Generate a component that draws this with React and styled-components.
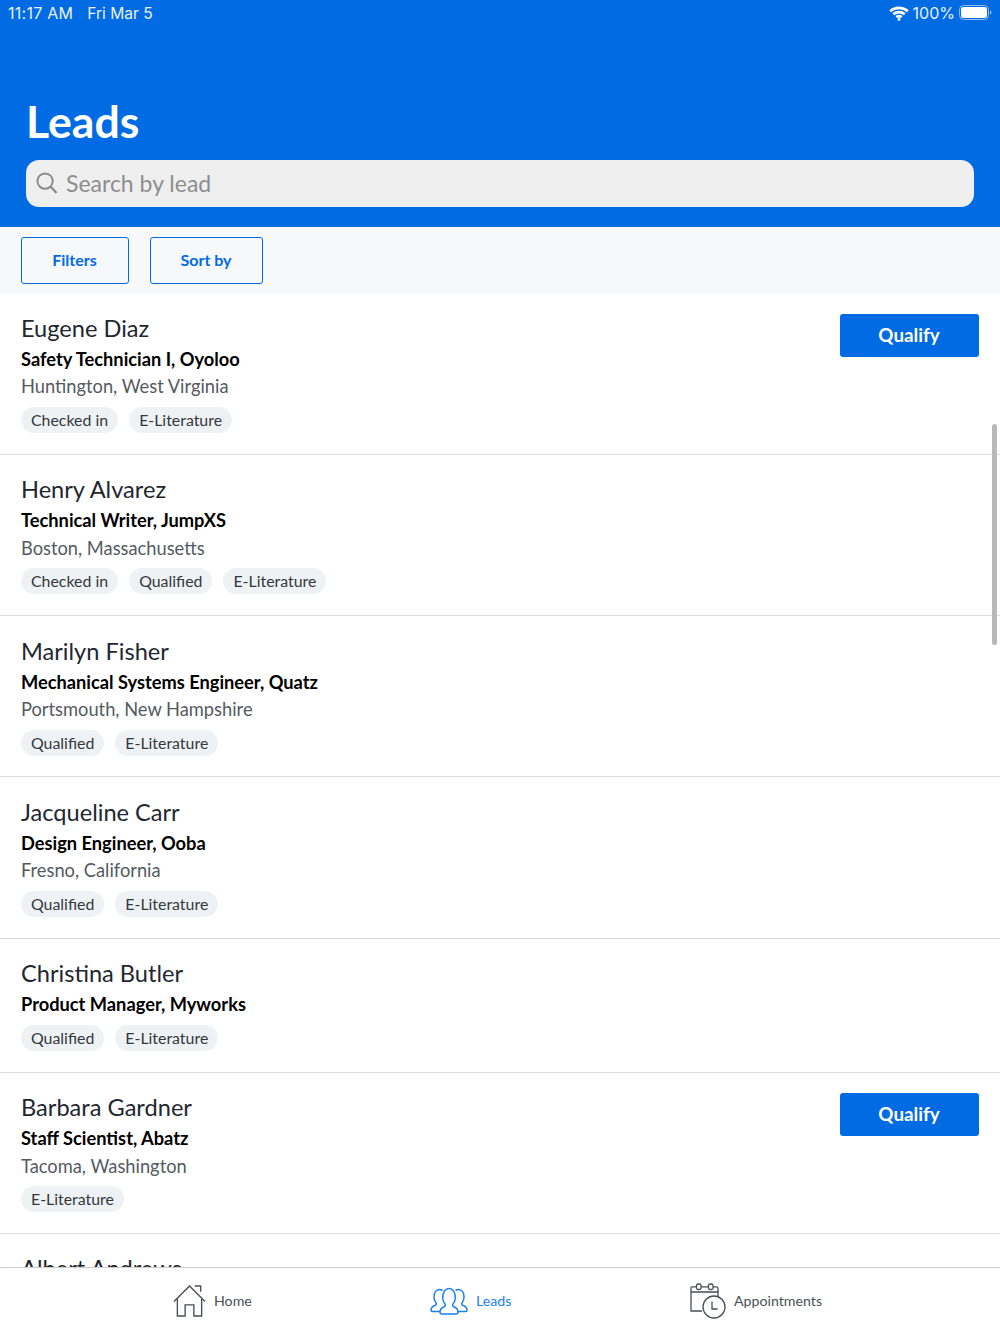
import React from "react";
import styled, { createGlobalStyle } from "styled-components";

const Global = createGlobalStyle`
  html, body { margin: 0; padding: 0; background: #fff; }
  body { font-family: Lato, "Liberation Sans", sans-serif; }
  * { box-sizing: border-box; }
`;
const Page = styled.div`
  position: relative;
  width: 1000px;
  height: 1333px;
  overflow: hidden;
  display: flex;
  flex-direction: column;
  background: #fff;
`;
const Header = styled.header`
  height: 227px;
  flex: none;
  background: #006be3;
  color: #fff;
  padding: 0 26px;
  display: flex;
  flex-direction: column;
`;
const StatusBar = styled.div`
  height: 26px;
  margin: 0 -18px;
  display: flex;
  align-items: center;
  justify-content: space-between;
  font-family: Inter, Roboto, sans-serif;
  font-size: 16px;
  color: #e8f1fd;
`;
const StatusGroup = styled.div`
  display: flex;
  align-items: center;
  gap: ${p => p.$gap}px;
`;
const Clock = styled.span`
  letter-spacing: 0.25px;
`;
const DateText = styled.span`
  font-size: 15.6px;
`;
const Title = styled.h1`
  margin: 68px 0 0;
  font-size: 44.6px;
  line-height: 53px;
  font-weight: 700;
`;
const SearchBox = styled.div`
  margin-top: 13px;
  height: 47px;
  border-radius: 13px;
  background: #efefef;
  display: flex;
  align-items: center;
  gap: 8px;
  padding: 0 0 2px 10px;
  color: #8e8e8e;
  font-size: 23px;
`;
const Toolbar = styled.div`
  height: 66.6px;
  flex: none;
  background: #f7f8fa;
  display: flex;
  align-items: center;
  gap: 21px;
  padding: 0 21px;
`;
const OutlineButton = styled.div`
  height: 47px;
  width: ${p => p.$w}px;
  border: 1.5px solid #006be3;
  border-radius: 3px;
  display: flex;
  align-items: center;
  justify-content: center;
  color: #006be3;
  font-size: 16px;
  font-weight: 700;
  padding: 0 1px 1px 0;
`;
const List = styled.div`
  flex: 1;
  overflow: hidden;
  min-height: 0;
`;
const Row = styled.div`
  position: relative;
  height: ${p => (p.$short ? 134 : 161.3)}px;
  border-bottom: 1.5px solid #dcdcdc;
  padding: 18.4px 21px 0;
`;
const Name = styled.div`
  font-size: 23.6px;
  line-height: 32px;
  color: #1f2730;
  font-weight: 400;
`;
const Role = styled.div`
  margin-top: 3px;
  font-size: 18.25px;
  line-height: 24px;
  color: #000;
  font-weight: 700;
`;
const Location = styled.div`
  margin-top: 3.4px;
  font-size: 18.3px;
  line-height: 24px;
  color: #555a60;
`;
const Tags = styled.div`
  margin-top: 8.6px;
  display: flex;
  gap: 11px;
`;
const Tag = styled.span`
  height: 26px;
  padding: 0 10px;
  border-radius: 13px;
  background: #eff2f5;
  color: #33383d;
  font-size: 15.9px;
  line-height: 26px;
`;
const Qualify = styled.div`
  position: absolute;
  top: 20px;
  right: 21px;
  width: 139px;
  height: 43px;
  border-radius: 3px;
  background: #006be3;
  color: #fff;
  font-size: 18.8px;
  font-weight: 700;
  padding: 0 1px 1px 0;
  display: flex;
  align-items: center;
  justify-content: center;
`;
const Scrollbar = styled.div`
  position: absolute;
  left: 992px;
  top: 424px;
  width: 5px;
  height: 221px;
  border-radius: 3px;
  background: #b9b9b9;
`;
const TabBar = styled.nav`
  position: absolute;
  left: 0;
  right: 0;
  bottom: 0;
  height: 66px;
  background: #fff;
  border-top: 1.5px solid #cfcfcf;
  display: flex;
  align-items: center;
  padding-left: 173px;
`;
const TabItem = styled.div`
  width: ${p => p.$w}px;
  flex: none;
  display: flex;
  align-items: center;
  gap: 8px;
  font-size: 14.2px;
  color: ${p => (p.$active ? "#1a7ff0" : "#4a4f55")};
`;
const TabLabel = styled.span`
  margin-top: -1px;
`;

const leads = [
  { n: "Eugene Diaz", r: "Safety Technician I, Oyoloo", l: "Huntington, West Virginia", t: ["Checked in", "E-Literature"], q: true },
  { n: "Henry Alvarez", r: "Technical Writer, JumpXS", l: "Boston, Massachusetts", t: ["Checked in", "Qualified", "E-Literature"] },
  { n: "Marilyn Fisher", r: "Mechanical Systems Engineer, Quatz", l: "Portsmouth, New Hampshire", t: ["Qualified", "E-Literature"] },
  { n: "Jacqueline Carr", r: "Design Engineer, Ooba", l: "Fresno, California", t: ["Qualified", "E-Literature"] },
  { n: "Christina Butler", r: "Product Manager, Myworks", t: ["Qualified", "E-Literature"] },
  { n: "Barbara Gardner", r: "Staff Scientist, Abatz", l: "Tacoma, Washington", t: ["E-Literature"], q: true },
  { n: "Albert Andrews", r: "", l: "", t: [] },
];

const Wifi = () => (
  <svg width="20" height="15" viewBox="0 0 20 15" fill="none" stroke="#fff" strokeWidth="2.7">
    <path d="M1.2 5.2C6 .8 14 .8 18.800 5.2" />
    <path d="M4.300 8.300c3.200-2.800 8.200-2.800 11.400 0" />
    <path d="M7.300 11.100c1.600-1.200 3.800-1.200 5.400 0" />
    <circle cx="10" cy="13.400" r="1.400" fill="#fff" stroke="none" />
  </svg>
);
const Battery = () => (
  <svg width="33" height="16" viewBox="0 0 33 16">
    <rect x=".5" y=".5" width="29" height="14" rx="4" fill="none" stroke="#8fbdf2" />
    <rect x="2" y="2" width="26" height="11" rx="2.5" fill="#fff" />
    <path d="M31 5.500c1 .4 1.500 1.100 1.500 2s-.5 1.600-1.500 2z" fill="#8fbdf2" />
  </svg>
);
const SearchIcon = () => (
  <svg width="22" height="24" viewBox="0 0 23 24" fill="none" stroke="#8a8a8a" strokeWidth="2">
    <circle cx="9.500" cy="10" r="8" />
    <path d="M15.500 16l6 6.500" strokeWidth="2.400" />
  </svg>
);
const HomeIcon = () => (
  <svg width="33" height="34" viewBox="0 0 34 34" fill="none" stroke="#4a4f55" strokeWidth="1.400">
    <path d="M1 17.500 17 1.500l16 16" />
    <path d="M4.500 15v17.500h8V21h9v11.500h8V15" />
    <path d="M22.500 1.500h6v6" />
  </svg>
);
const LeadsIcon = () => (
  <svg width="38" height="28" viewBox="0 0 38 28" fill="none" stroke="#1a7ff0" strokeWidth="1.500">
    <path d="M12 27c-1.500 0-2-.8-2-2 0-3 2-4.500 4.500-5.500 1-.5 1-2 .2-3-1.500-1.500-2-3.500-2-6 0-5 2.500-9 6.300-9s6.300 4 6.300 9c0 2.500-.5 4.500-2 6-.8 1-.8 2.500.2 3 2.500 1 4.500 2.500 4.500 5.500 0 1.200-.5 2-2 2z" />
    <path d="M12.500 3.600C11.700 2.900 10.700 2.500 9.500 2.500 6 2.500 4 6 4 10c0 2.500.5 4 1.800 5.500.8 1 .6 2.300-.5 2.800C2.800 19.300 1 20.700 1 23c0 1 .5 1.500 1.500 1.500H10" />
    <path d="M25.500 3.600c.8-.7 1.800-1.100 3-1.100C32 2.500 34 6 34 10c0 2.500-.5 4-1.800 5.500-.8 1-.6 2.300.5 2.800 2.500 1 4.300 2.400 4.300 4.700 0 1-.5 1.500-1.500 1.500H28" />
  </svg>
);
const CalendarIcon = () => (
  <svg width="36" height="36" viewBox="0 0 36 36" fill="none" stroke="#4a4f55" strokeWidth="1.300">
    <path d="M12 28H1V5c0-.8.4-1.200 1.200-1.200H6" />
    <path d="M1 9h27v5" />
    <path d="M11 3.800h7M23 3.800h3.500c1 0 1.500.5 1.500 1.500V9" />
    <rect x="6.500" y="1" width="4.500" height="5.500" rx="1.500" />
    <rect x="18.500" y="1" width="4.500" height="5.500" rx="1.500" />
    <circle cx="24" cy="24" r="11" />
    <path d="M22 18.500V26h5.500" />
  </svg>
);

export default function App() {
  return (
    <Page>
      <Global />
      <Header>
        <StatusBar>
          <StatusGroup $gap={14}><Clock>11:17 AM</Clock><DateText>Fri Mar 5</DateText></StatusGroup>
          <StatusGroup $gap={4}><Wifi /><span>100%</span><Battery /></StatusGroup>
        </StatusBar>
        <Title>Leads</Title>
        <SearchBox><SearchIcon /><span>Search by lead</span></SearchBox>
      </Header>
      <Toolbar>
        <OutlineButton $w={108}>Filters</OutlineButton>
        <OutlineButton $w={113}>Sort by</OutlineButton>
      </Toolbar>
      <List>
        {leads.map(x => (
          <Row key={x.n} $short={!x.l && x.r}>
            <Name>{x.n}</Name>
            <Role>{x.r}</Role>
            {x.l && <Location>{x.l}</Location>}
            <Tags>{x.t.map(t => <Tag key={t}>{t}</Tag>)}</Tags>
            {x.q && <Qualify>Qualify</Qualify>}
          </Row>
        ))}
      </List>
      <Scrollbar />
      <TabBar>
        <TabItem $w={257}><HomeIcon /><TabLabel>Home</TabLabel></TabItem>
        <TabItem $w={260} $active><LeadsIcon /><TabLabel>Leads</TabLabel></TabItem>
        <TabItem $w={200}><CalendarIcon /><TabLabel>Appointments</TabLabel></TabItem>
      </TabBar>
    </Page>
  );
}
